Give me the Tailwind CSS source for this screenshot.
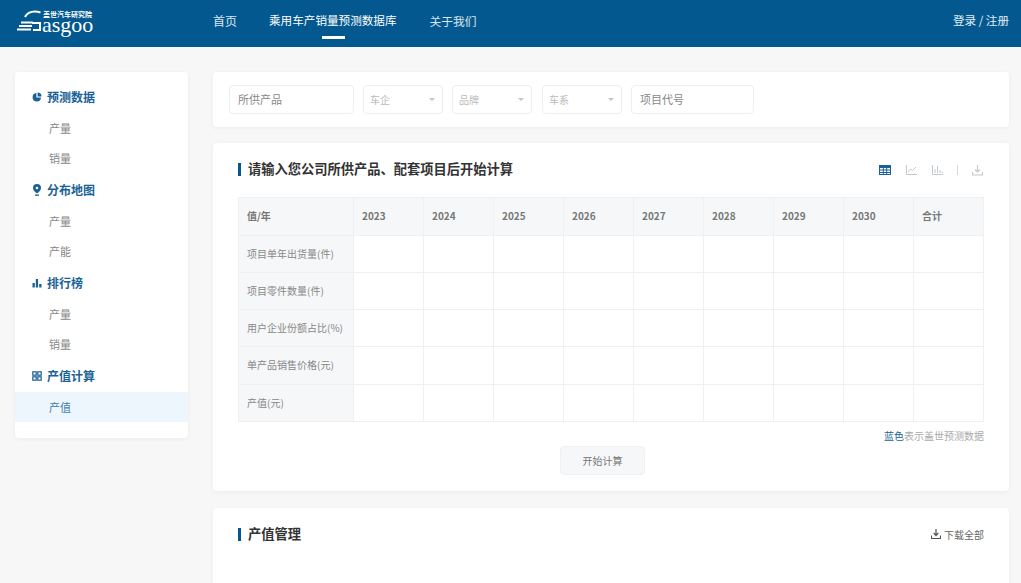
<!DOCTYPE html>
<html lang="zh-CN">

<head>
    <meta charset="UTF-8">
    <meta name="viewport" content="width=device-width, initial-scale=1.0">
    <title>乘用车产销量预测数据库</title>
    <script src="https://cdn.jsdelivr.net/npm/@tailwindcss/browser@4"></script>
</head>

<body class="h-screen overflow-hidden bg-[#f7f7f7] font-['Noto_Sans_CJK_SC','Liberation_Sans',sans-serif]">
    <!-- Header -->
    <header class="h-[47px] bg-[#02588f] flex items-center pl-[16px] pr-[12px] text-white">
        <div class="w-[197px] h-full relative shrink-0">
            <svg class="absolute left-0 top-[9px]" width="27" height="22" viewBox="0 0 27 22" fill="none">
                <path d="M9 8C11 4 15 2.500 19 2.500c2 0 4 .5 5.500 1" stroke="#fff" stroke-width="2" />
                <path d="M5 13.500h12M3 17h13M1 20.500h14" stroke="#fff" stroke-width="1.800" />
                <path d="M16 14h8v7h-7" stroke="#fff" stroke-width="2" />
            </svg>
            <span class="absolute left-[27px] top-[11px] text-[7px] leading-[6px] font-bold whitespace-nowrap">盖世汽车研究院</span>
            <span class="absolute left-[26px] top-[20px] text-[22px] leading-[10px] font-['Liberation_Serif',serif]">asgoo</span>
        </div>
        <nav class="flex gap-[32px] h-full items-center">
            <a class="text-[12px] text-white/85 pb-[6px]">首页</a>
            <a class="relative h-full flex items-center text-[11.600px] pb-[6px]">乘用车产销量预测数据库
                <span class="absolute left-[53px] top-[36px] w-[23px] h-[3px] bg-white"></span>
            </a>
            <a class="ml-[1px] text-[11.750px] text-white/85 pb-[6px]">关于我们</a>
        </nav>
        <div class="ml-auto text-[11.600px] text-white/90 pb-[6px]">登录 / 注册</div>
    </header>

    <div class="flex items-start pl-[15px] pr-[12px] pt-[25px] gap-[25px]">
        <!-- Sidebar -->
        <aside class="w-[173px] shrink-0 bg-white pt-[9px] pb-[16px] rounded-sm shadow-[0_1px_4px_rgba(0,0,0,0.05)]">
            <div class="h-[32px] pl-[17px] flex items-center gap-[5px] text-[12px] font-bold text-[#1a6296]">
                <svg width="10" height="10" viewBox="0 0 10 10" fill="#1a6296">
                    <path d="M4.400 1.100A4.200 4.200 0 1 0 9 5.600H4.400z" />
                    <path d="M5.600 0.400v4h4a4.200 4.200 0 0 0-4-4z" />
                </svg>
                预测数据
            </div>
            <div class="h-[30px] pl-[34px] flex items-center text-[11px] text-[#888]">产量</div>
            <div class="h-[31px] pl-[34px] flex items-center text-[11px] text-[#888]">销量</div>
            <div class="h-[32px] pl-[17px] flex items-center gap-[5px] text-[12px] font-bold text-[#1a6296]">
                <svg width="10" height="12" viewBox="0 0 10 12" fill="#1a6296">
                    <path fill-rule="evenodd" d="M5 0a4 4 0 0 0-4 4c0 2.400 2.500 4.500 4 5.500 1.500-1 4-3.100 4-5.500a4 4 0 0 0-4-4zm0 2.700a1.300 1.300 0 1 1 0 2.600 1.300 1.300 0 0 1 0-2.600z" />
                    <rect x="3" y="10.500" width="4" height="1.300" />
                </svg>
                分布地图
            </div>
            <div class="h-[30px] pl-[34px] flex items-center text-[11px] text-[#888]">产量</div>
            <div class="h-[31px] pl-[34px] flex items-center text-[11px] text-[#888]">产能</div>
            <div class="h-[32px] pl-[17px] flex items-center gap-[5px] text-[12px] font-bold text-[#1a6296]">
                <svg width="10" height="10" viewBox="0 0 10 10" fill="#1a6296">
                    <rect x="0.500" y="5" width="2.300" height="4.500" />
                    <rect x="3.800" y="1" width="2.300" height="8.500" />
                    <rect x="7.200" y="6" width="2.300" height="3.500" />
                </svg>
                排行榜
            </div>
            <div class="h-[30px] pl-[34px] flex items-center text-[11px] text-[#888]">产量</div>
            <div class="h-[31px] pl-[34px] flex items-center text-[11px] text-[#888]">销量</div>
            <div class="h-[32px] pl-[17px] flex items-center gap-[5px] text-[12px] font-bold text-[#1a6296]">
                <svg width="10" height="10" viewBox="0 0 10 10" fill="none" stroke="#1a6296" stroke-width="1.200">
                    <rect x="0.800" y="0.800" width="3.400" height="3.400" />
                    <rect x="5.800" y="0.800" width="3.400" height="3.400" />
                    <rect x="0.800" y="5.800" width="3.400" height="3.400" />
                    <rect x="5.800" y="5.800" width="3.400" height="3.400" />
                </svg>
                产值计算
            </div>
            <div class="h-[30px] pl-[34px] flex items-center text-[11px] text-[#3f7fb0] bg-[#eef6fd]">产值</div>
        </aside>

        <!-- Main -->
        <main class="w-[796px] shrink-0 flex flex-col gap-[16px]">
            <!-- Filters -->
            <section class="h-[55px] bg-white rounded-sm px-[16px] flex items-center gap-[9px] shadow-[0_1px_4px_rgba(0,0,0,0.05)]">
                <div class="w-[125px] h-[29px] border border-[#eeeeee] rounded-sm pl-[8px] flex items-center text-[11px] text-[#888]">所供产品</div>
                <div class="w-[80px] h-[29px] border border-[#eeeeee] rounded-sm pl-[6px] pr-[7px] flex items-center justify-between text-[10px] text-[#bbb]">车企
                    <span class="w-0 h-0 border-x-[3px] border-x-transparent border-t-[3px] border-t-[#c4c4c4]"></span>
                </div>
                <div class="w-[80px] mr-[1px] h-[29px] border border-[#eeeeee] rounded-sm pl-[6px] pr-[7px] flex items-center justify-between text-[10px] text-[#bbb]">品牌
                    <span class="w-0 h-0 border-x-[3px] border-x-transparent border-t-[3px] border-t-[#c4c4c4]"></span>
                </div>
                <div class="w-[80px] h-[29px] border border-[#eeeeee] rounded-sm pl-[6px] pr-[7px] flex items-center justify-between text-[10px] text-[#bbb]">车系
                    <span class="w-0 h-0 border-x-[3px] border-x-transparent border-t-[3px] border-t-[#c4c4c4]"></span>
                </div>
                <div class="w-[123px] h-[29px] border border-[#eeeeee] rounded-sm pl-[8px] flex items-center text-[11px] text-[#888]">项目代号</div>
            </section>

            <!-- Calculator -->
            <section class="h-[348px] bg-white rounded-sm px-[25px] shadow-[0_1px_4px_rgba(0,0,0,0.05)]">
                <div class="h-[52px] flex items-center">
                    <span class="w-[3px] h-[13px] bg-[#02588f] mr-[7px]"></span>
                    <h2 class="text-[13.250px] font-bold text-[#333]">请输入您公司所供产品、配套项目后开始计算</h2>
                    <div class="ml-auto mr-[1px] mt-[2px] flex items-center">
                        <svg width="12" height="10" viewBox="0 0 12 10" fill="#1a6296">
                            <path fill-rule="evenodd" d="M0 0h12v10H0zM1 3v1.500h2.800V3zm3.800 0v1.500h2.400V3zm3.400 0v1.500H11V3zM1 5.500V7h2.800V5.500zm3.800 0V7h2.400V5.500zm3.400 0V7H11V5.500zM1 8v1h2.800V8zm3.800 0v1h2.400V8zm3.400 0v1H11V8z" />
                        </svg>
                        <svg class="ml-[15px]" width="11" height="10" viewBox="0 0 11 10" fill="none" stroke="#c3c9cf">
                            <path d="M.5 0v9.500H11M2 7l2.500-3 2 1.500L10 2" />
                        </svg>
                        <svg class="ml-[15px]" width="11" height="10" viewBox="0 0 11 10" fill="none" stroke="#c3c9cf">
                            <path d="M.5 0v9.500H11M3 8V4M5.500 8V1M8 8V5M10 8V6.500" />
                        </svg>
                        <span class="ml-[14px] w-px h-[10px] bg-[#d5d9dd]"></span>
                        <svg class="ml-[14px]" width="11" height="11" viewBox="0 0 11 11" fill="none" stroke="#c3c9cf" stroke-width="1.100">
                            <path d="M5.500 0v6.500M3 4.500l2.500 2.500L8 4.500M.5 7v3h10V7" />
                        </svg>
                    </div>
                </div>

                <table class="mt-[2px] table-fixed border-collapse w-[745px] text-[10px] text-[#888]">
                    <colgroup>
                        <col class="w-[115px]">
                        <col class="w-[70px]"><col class="w-[70px]"><col class="w-[70px]">
                        <col class="w-[70px]"><col class="w-[70px]"><col class="w-[70px]">
                        <col class="w-[70px]"><col class="w-[70px]"><col class="w-[70px]">
                    </colgroup>
                    <thead>
                        <tr class="h-[38px] bg-[#f6f7f9] text-[#777] font-bold text-left [&>th]:border [&>th]:border-[#eef0f2] [&>th]:pl-[8px] [&>th]:pb-[2px]">
                            <th>值/年</th>
                            <th>2023</th><th>2024</th><th>2025</th><th>2026</th><th>2027</th><th>2028</th><th>2029</th><th>2030</th><th>合计</th>
                        </tr>
                    </thead>
                    <tbody class="[&_td]:border [&_td]:border-[#eef0f2] [&_td]:pb-[2px] [&_td:first-child]:bg-[#f6f7f9] [&_td:first-child]:pl-[8px]">
                        <tr class="h-[37px]"><td>项目单年出货量(件)</td><td></td><td></td><td></td><td></td><td></td><td></td><td></td><td></td><td></td></tr>
                        <tr class="h-[37px]"><td>项目零件数量(件)</td><td></td><td></td><td></td><td></td><td></td><td></td><td></td><td></td><td></td></tr>
                        <tr class="h-[37px]"><td>用户企业份额占比(%)</td><td></td><td></td><td></td><td></td><td></td><td></td><td></td><td></td><td></td></tr>
                        <tr class="h-[38px]"><td>单产品销售价格(元)</td><td></td><td></td><td></td><td></td><td></td><td></td><td></td><td></td><td></td></tr>
                        <tr class="h-[37px]"><td>产值(元)</td><td></td><td></td><td></td><td></td><td></td><td></td><td></td><td></td><td></td></tr>
                    </tbody>
                </table>

                <p class="mt-[6px] h-[15px] leading-[15px] text-right text-[10px] text-[#aaa]"><span class="text-[#1a6296]">蓝色</span>表示盖世预测数据</p>
                <div class="mt-[3px] ml-[322px]">
                    <button class="block w-[85px] h-[29px] bg-[#f6f7f9] border border-[#f0f1f3] rounded-sm text-[10px] text-[#777]">开始计算</button>
                </div>
            </section>

            <!-- Output management -->
            <section class="mt-[1px] h-[200px] bg-white rounded-sm px-[25px] shadow-[0_1px_4px_rgba(0,0,0,0.05)]">
                <div class="h-[52px] flex items-center">
                    <span class="w-[3px] h-[13px] bg-[#02588f] mr-[7px]"></span>
                    <h2 class="text-[13.250px] font-bold text-[#333]">产值管理</h2>
                    <div class="ml-auto flex items-center gap-[3px] text-[10px] text-[#666]">
                        <svg width="10" height="10" viewBox="0 0 10 10" fill="none" stroke="#555" stroke-width="1.200">
                            <path d="M5 0v6M2.700 4L5 6.500 7.300 4M.5 6.500v3h9v-3" />
                        </svg>
                        下载全部
                    </div>
                </div>
            </section>
        </main>
    </div>
</body>

</html>
